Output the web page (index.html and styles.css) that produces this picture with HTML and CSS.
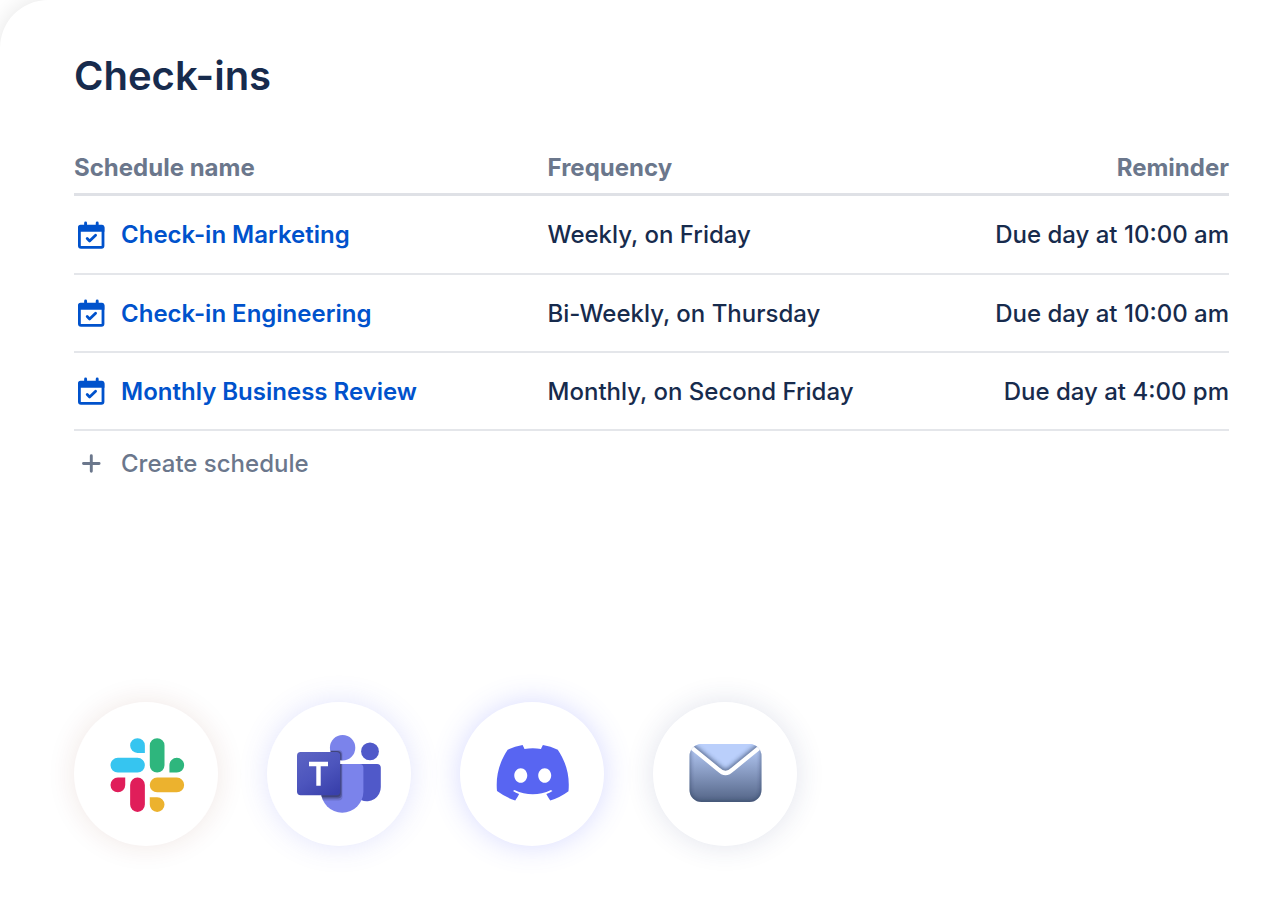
FILE: index.html
```html
<!DOCTYPE html>
<html lang="en">
<head>
<meta charset="utf-8">
<title>Check-ins</title>
<link rel="stylesheet" href="styles.css">
</head>
<body>
<svg class="defs" aria-hidden="true">
  <symbol id="calendar" viewBox="0 0 28 28">
    <rect x="2.4" y="6" width="23.6" height="20.4" rx="1.6" fill="none" stroke="currentColor" stroke-width="2.8"/>
    <path d="M1 10.8V6.200Q1 3.700 3.500 3.700H24.900Q27.400 3.700 27.400 6.200V10.800Z" fill="currentColor"/>
    <path d="M8.600 1.900V6M20.200 1.900V6" stroke="currentColor" stroke-width="2.900" stroke-linecap="round"/>
    <path d="M10.200 17.600L12.600 20L18.600 14.200" fill="none" stroke="currentColor" stroke-width="2.800" stroke-linecap="round" stroke-linejoin="round"/>
  </symbol>
</svg>
<main class="card">
  <h1 class="title">Check-ins</h1>
  <table class="schedules">
    <thead>
      <tr><th class="col-name" scope="col">Schedule name</th><th class="col-frequency" scope="col">Frequency</th><th class="col-reminder" scope="col">Reminder</th></tr>
    </thead>
    <tbody>
      <tr>
        <td><a class="schedule" href="#marketing"><svg class="icon" aria-hidden="true"><use href="#calendar"/></svg>Check-in Marketing</a></td>
        <td>Weekly, on Friday</td>
        <td class="col-reminder">Due day at 10:00 am</td>
      </tr>
      <tr>
        <td><a class="schedule" href="#engineering"><svg class="icon" aria-hidden="true"><use href="#calendar"/></svg>Check-in Engineering</a></td>
        <td>Bi-Weekly, on Thursday</td>
        <td class="col-reminder">Due day at 10:00 am</td>
      </tr>
      <tr>
        <td><a class="schedule" href="#review"><svg class="icon" aria-hidden="true"><use href="#calendar"/></svg>Monthly Business Review</a></td>
        <td>Monthly, on Second Friday</td>
        <td class="col-reminder">Due day at 4:00 pm</td>
      </tr>
    </tbody>
  </table>
  <button class="create" type="button">
    <svg class="icon" viewBox="0 0 28 28" aria-hidden="true"><path d="M14.300 6.700V22.300M6.500 14.500H22.100" stroke="currentColor" stroke-width="2.900" stroke-linecap="round"/></svg>
    Create schedule
  </button>
  <div class="channels">
    <a class="channel channel-slack" href="#slack" aria-label="Slack">
      <svg viewBox="0 0 144 144" aria-hidden="true">
        <g transform="translate(36.5 36) scale(1.37)">
          <path fill="#36c5f0" d="M19.712.133a5.381 5.381 0 0 0-5.376 5.387 5.381 5.381 0 0 0 5.376 5.386h5.376V5.52A5.381 5.381 0 0 0 19.712.133m0 14.365H5.376A5.381 5.381 0 0 0 0 19.884a5.381 5.381 0 0 0 5.376 5.387h14.336a5.381 5.381 0 0 0 5.376-5.387 5.381 5.381 0 0 0-5.376-5.386"/>
          <path fill="#2eb67d" d="M53.76 19.884a5.381 5.381 0 0 0-5.376-5.386 5.381 5.381 0 0 0-5.376 5.386v5.387h5.376a5.381 5.381 0 0 0 5.376-5.387m-14.336 0V5.52A5.381 5.381 0 0 0 34.048.133a5.381 5.381 0 0 0-5.376 5.387v14.364a5.381 5.381 0 0 0 5.376 5.387 5.381 5.381 0 0 0 5.376-5.387"/>
          <path fill="#ecb22e" d="M34.048 54a5.381 5.381 0 0 0 5.376-5.387 5.381 5.381 0 0 0-5.376-5.386h-5.376v5.386A5.381 5.381 0 0 0 34.048 54m0-14.365h14.336a5.381 5.381 0 0 0 5.376-5.386 5.381 5.381 0 0 0-5.376-5.387H34.048a5.381 5.381 0 0 0-5.376 5.387 5.381 5.381 0 0 0 5.376 5.386"/>
          <path fill="#e01e5a" d="M0 34.249a5.381 5.381 0 0 0 5.376 5.386 5.381 5.381 0 0 0 5.376-5.386v-5.387H5.376A5.381 5.381 0 0 0 0 34.25m14.336-.001v14.364A5.381 5.381 0 0 0 19.712 54a5.381 5.381 0 0 0 5.376-5.387V34.25a5.381 5.381 0 0 0-5.376-5.387 5.381 5.381 0 0 0-5.376 5.387"/>
        </g>
      </svg>
    </a>
    <a class="channel channel-teams" href="#teams" aria-label="Microsoft Teams">
      <svg viewBox="0 0 144 144" aria-hidden="true">
        <defs>
          <linearGradient id="tile" x1="0.18" y1="0" x2="0.82" y2="1"><stop offset="0" stop-color="#5a62c3"/><stop offset="0.5" stop-color="#4d55bd"/><stop offset="1" stop-color="#3940ab"/></linearGradient>
          <clipPath id="people"><circle cx="75.6" cy="45.7" r="12.7"/><path d="M54 62H92.6Q96.4 62 96.4 65.8V89.5A21 21 0 0 1 54 89.5Z"/></clipPath>
        </defs>
        <circle cx="103" cy="49.4" r="8.9" fill="#5059c9"/>
        <path d="M90 62H110Q113.8 62 113.8 65.8V85A14 14 0 0 1 94 98Z" fill="#5059c9"/>
        <circle cx="75.6" cy="45.7" r="12.7" fill="#7b83eb"/>
        <path d="M54 62H92.6Q96.4 62 96.4 65.8V89.5A21.2 21.2 0 0 1 54 89.5Z" fill="#7b83eb"/>
        <g clip-path="url(#people)" fill="#000">
          <rect x="30" y="48" width="45.5" height="50.5" rx="4" opacity=".13"/>
          <rect x="30" y="49" width="44.8" height="47.5" rx="4" opacity=".24"/>
          <rect x="30" y="49" width="43.8" height="46" rx="4" opacity=".2"/>
        </g>
        <rect x="30" y="50" width="43.2" height="43.3" rx="3.7" fill="url(#tile)"/>
        <path d="M42 62H61M51.5 60.2V83.8" stroke="#fff" stroke-width="4.4" fill="none"/>
      </svg>
    </a>
    <a class="channel channel-discord" href="#discord" aria-label="Discord">
      <svg viewBox="0 0 144 144" aria-hidden="true">
        <path transform="translate(36.7 43) scale(.567 .575)" fill="#5865f2" d="M107.7,8.07A105.15,105.15,0,0,0,81.47,0a72.06,72.06,0,0,0-3.36,6.83A97.68,97.68,0,0,0,49,6.83,72.37,72.37,0,0,0,45.64,0,105.89,105.89,0,0,0,19.39,8.09C2.79,32.65-1.71,56.6.54,80.21h0A105.73,105.73,0,0,0,32.71,96.36,77.7,77.7,0,0,0,39.6,85.25a68.42,68.42,0,0,1-10.85-5.18c.91-.66,1.8-1.34,2.66-2a75.57,75.57,0,0,0,64.32,0c.87.71,1.76,1.39,2.66,2a68.68,68.68,0,0,1-10.87,5.19,77,77,0,0,0,6.89,11.1A105.25,105.25,0,0,0,126.6,80.22h0C129.24,52.84,122.09,29.11,107.7,8.07ZM42.45,65.69C36.18,65.69,31,60,31,53s5-12.74,11.43-12.74S54,46,53.89,53,48.84,65.69,42.45,65.69Zm42.24,0C78.41,65.69,73.25,60,73.25,53s5-12.74,11.44-12.74S96.23,46,96.12,53,91.08,65.69,84.69,65.69Z"/>
      </svg>
    </a>
    <a class="channel channel-mail" href="#mail" aria-label="Email">
      <svg viewBox="0 0 144 144" aria-hidden="true">
        <defs>
          <linearGradient id="sheet" x1="0" y1="42" x2="0" y2="100" gradientUnits="userSpaceOnUse"><stop offset="0" stop-color="#bacffb"/><stop offset="1" stop-color="#536486"/></linearGradient>
          <clipPath id="envelope"><rect x="36.5" y="42" width="72" height="58" rx="12"/></clipPath>
          <clipPath id="flap"><path d="M36 42L65.500 67.500Q72.500 74.500 79.500 67.500L109 42Z"/></clipPath>
          <clipPath id="pocket"><path d="M36 43.500L65.500 67.500Q72.500 74.500 79.500 67.500L109 43.500V101H36Z"/></clipPath>
          <filter id="soft" x="-20%" y="-20%" width="140%" height="140%"><feGaussianBlur stdDeviation="2"/></filter>
        </defs>
        <g clip-path="url(#envelope)">
          <rect x="36" y="42" width="73" height="58" fill="url(#sheet)"/>
          <g clip-path="url(#pocket)">
            <rect x="35.500" y="30" width="74" height="71" rx="13" fill="none" stroke="#253858" stroke-width="3" opacity=".65" filter="url(#soft)"/>
          </g>
          <g clip-path="url(#flap)">
            <rect x="36" y="42" width="73" height="32" fill="#bacffb"/>
            <path d="M36 43.500L65.500 67.500Q72.500 74.500 79.500 67.500L109 43.500" fill="none" stroke="#253858" stroke-width="8" opacity=".6" filter="url(#soft)"/>
          </g>
          <path d="M36 43.500L65.500 67.500Q72.500 74.500 79.500 67.500L109 43.500" fill="none" stroke="#fff" stroke-width="4.200"/>
        </g>
      </svg>
    </a>
  </div>
</main>
</body>
</html>
```
FILE: styles.css
```css
* { box-sizing: border-box; }

body {
  margin: 0;
  background: #fff;
  color: #172b4d;
  font-family: Inter, "Liberation Sans", sans-serif;
  font-size: 24px;
  font-weight: 500;
}

.defs {
  position: absolute;
  width: 0;
  height: 0;
}

.card {
  min-height: 100vh;
  padding: 52px 43px 74px 74px;
  background: #fff;
  border-top-left-radius: 48px;
  box-shadow: 0 0 24px rgba(0, 0, 0, 0.11);
  display: flex;
  flex-direction: column;
}

.title {
  margin: 0 0 44px;
  font-size: 40px;
  line-height: 48px;
  font-weight: 600;
}

.schedules {
  width: 100%;
  table-layout: fixed;
  border-collapse: separate;
  border-spacing: 0;
}

.schedules th {
  height: 52px;
  padding: 0 0 2px;
  border-bottom: 3px solid #dfe1e6;
  color: #6b778c;
  font-weight: 700;
  text-align: left;
}

.schedules td {
  height: 78px;
  padding: 0;
  border-bottom: 2px solid #e4e6ea;
  white-space: nowrap;
}

.schedules tbody tr:first-child td { height: 79px; }

.schedules .col-name { width: 41%; }
.schedules .col-frequency { width: 32%; }
.schedules .col-reminder { text-align: right; }

.icon {
  width: 28px;
  height: 28px;
  flex: none;
}

.schedule,
.create {
  display: flex;
  align-items: center;
  gap: 16px;
  padding: 0 0 0 3px;
}

.schedule {
  color: #0052cc;
  font-weight: 600;
  text-decoration: none;
}

.create {
  align-self: flex-start;
  height: 64px;
  border: 0;
  background: none;
  color: #6b778c;
  font: inherit;
  cursor: pointer;
}

.channels {
  display: flex;
  gap: 49px;
  margin-top: auto;
}

.channel {
  width: 144px;
  height: 144px;
  border-radius: 50%;
  background: #fff;
}

.channel svg {
  display: block;
  width: 100%;
  height: 100%;
}

.channel-slack { box-shadow: 0 0 29px rgba(120, 40, 10, 0.11); }
.channel-teams { box-shadow: 0 0 29px rgba(80, 89, 240, 0.17); }
.channel-discord { box-shadow: 0 0 29px rgba(88, 101, 255, 0.24); }
.channel-mail { box-shadow: 0 0 29px rgba(40, 60, 120, 0.14); }
```
